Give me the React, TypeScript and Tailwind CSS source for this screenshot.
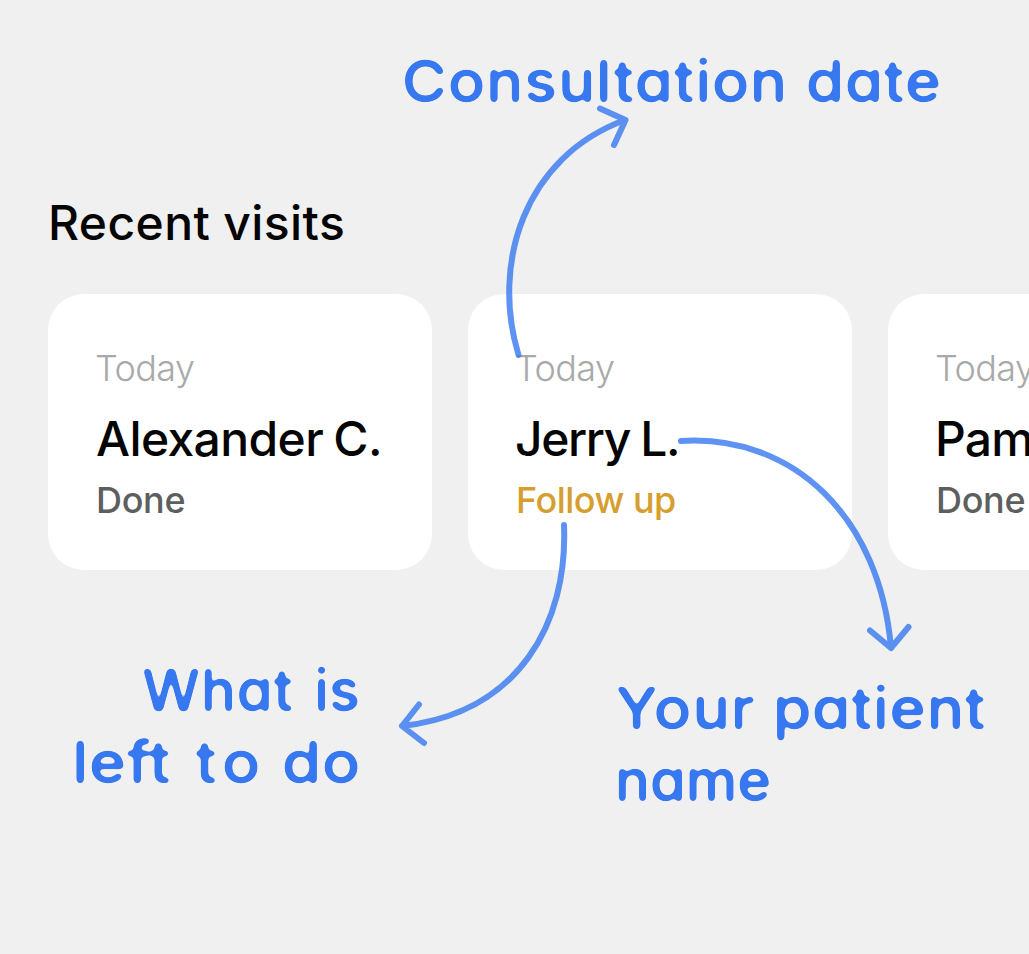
type Visit = { date: string; name: string; nameClass: string; status: string; statusClass: string };

const visits: Visit[] = [
  { date: 'Today', name: 'Alexander C.', nameClass: 'tracking-[-0.6px] [word-spacing:-2px]', status: 'Done', statusClass: 'text-[#5d5f5f] tracking-[-0.3px]' },
  { date: 'Today', name: 'Jerry L.', nameClass: '-ml-px tracking-[-1.4px] [word-spacing:-1px]', status: 'Follow up', statusClass: 'text-[#d69e2e] tracking-[-0.5px]' },
  { date: 'Today', name: 'Pam', nameClass: '-ml-px tracking-[-0.8px]', status: 'Done', statusClass: 'text-[#5d5f5f] tracking-[-0.3px]' },
];

function VisitCard({ visit }: { visit: Visit }) {
  return (
    <article className="h-[276px] w-[384px] shrink-0 rounded-[36px] bg-white px-12 pt-[49px] whitespace-nowrap">
      <p className="-ml-px text-[36px] leading-[50px] font-light tracking-[-0.6px] text-[#a8a9a9]">{visit.date}</p>
      <h2 className={`mt-[13px] text-[48px] leading-[66px] font-medium ${visit.nameClass}`}>{visit.name}</h2>
      <p className={`mt-[3px] text-[36px] leading-[50px] font-medium ${visit.statusClass}`}>{visit.status}</p>
    </article>
  );
}

const note =
  "text-[58px] leading-[72px] font-medium text-[#3778f0] whitespace-nowrap [font-feature-settings:'cv11','liga'_0,'calt'_0] [filter:url(#soft-ink)]";

function Arrows() {
  return (
    <svg
      className="pointer-events-none absolute inset-0"
      width="1029"
      height="954"
      fill="none"
      stroke="#3778f0"
      strokeOpacity="0.8"
      strokeWidth="6"
      strokeLinecap="round"
      strokeLinejoin="round"
    >
      <defs>
        <filter id="soft-ink" x="-5%" y="-5%" width="110%" height="110%" colorInterpolationFilters="sRGB">
          <feGaussianBlur stdDeviation="2" />
          <feColorMatrix values="1 0 0 0 0  0 1 0 0 0  0 0 1 0 0  0 0 0 7 -2.6" />
        </filter>
      </defs>
      <path d="M518.500 355C491 264 524 157 625 120M600 108.500L625.500 120L614 145" />
      <path d="M681 441C794 434 880 518 891 648M870 630.500L891 648L908.500 627" />
      <path d="M564 525C568 623 519 713 402 726M419 704.500L402 726L424 743" />
    </svg>
  );
}

export default function App() {
  return (
    <main className="relative h-[954px] w-[1029px] overflow-hidden bg-[#f0f0f0] pt-[45px] font-['Inter',sans-serif] text-[#050505]">
      <p className={`ml-[402px] flex w-[545px] origin-left scale-x-[1.06] gap-[17px] ${note}`}>
        <span className="tracking-[0.9px]">Consultation</span>
        <span className="tracking-[0.8px]">date</span>
      </p>
      <h1 className="mt-[76px] ml-12 text-[48px] leading-[60px] font-medium tracking-[0.4px]">Recent visits</h1>
      <section className="mt-[41px] ml-12 flex gap-9">
        {visits.map((visit, i) => (
          <VisitCard key={i} visit={visit} />
        ))}
      </section>
      <section className="flex">
        <div className={`mt-[84px] ml-[60px] flex w-[300px] flex-col items-end ${note}`}>
          <p className="flex gap-[20px]">
            <span className="tracking-[0.9px]">What</span>
            <span>is</span>
          </p>
          <p className="flex origin-right scale-x-[1.09]">
            <span className="mr-[22px] tracking-[0.7px]">left</span>
            <span className="mr-[15px] tracking-[5px]">to</span>
            <span className="-mr-px tracking-[1px]">do</span>
          </p>
        </div>
        <div className={`mt-[102px] ml-[255px] ${note}`}>
          <p className="flex origin-left scale-x-[1.07] gap-[16px]">
            <span className="tracking-[1px]">Your</span>
            <span className="tracking-[0.7px]">patient</span>
          </p>
          <p>name</p>
        </div>
      </section>
      <Arrows />
    </main>
  );
}
